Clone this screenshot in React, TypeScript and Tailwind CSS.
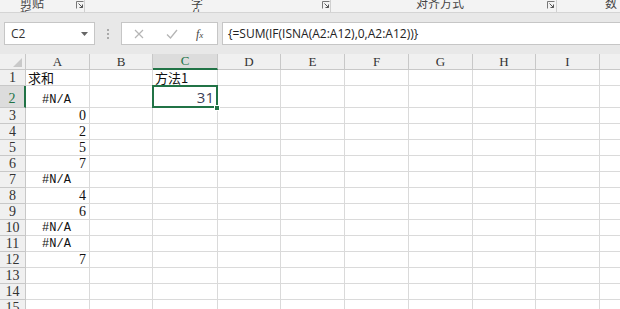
import React from "react";

const colW = [26, 64, 63, 65, 63, 64, 64, 64, 63, 64, 40];
const cols = ["A", "B", "C", "D", "E", "F", "G", "H", "I", ""];
const rowH = [16, 22, 16, 16, 16, 16, 16, 16, 16, 16, 16, 16, 16, 16, 16];

type Cell = { text: string; kind: "cn" | "err" | "num" | "big" };
const data: Record<string, Cell> = {
  "1-0": { text: "求和", kind: "cn" },
  "2-0": { text: "#N/A", kind: "err" },
  "3-0": { text: "0", kind: "num" },
  "4-0": { text: "2", kind: "num" },
  "5-0": { text: "5", kind: "num" },
  "6-0": { text: "7", kind: "num" },
  "7-0": { text: "#N/A", kind: "err" },
  "8-0": { text: "4", kind: "num" },
  "9-0": { text: "6", kind: "num" },
  "10-0": { text: "#N/A", kind: "err" },
  "11-0": { text: "#N/A", kind: "err" },
  "12-0": { text: "7", kind: "num" },
  "1-2": { text: "方法1", kind: "cn" },
  "2-2": { text: "31", kind: "big" },
};

function Launcher() {
  return (
    <svg width="8" height="8" viewBox="0 0 8 8" className="shrink-0">
      <path d="M0.5 7.5V0.5H7.5" fill="none" stroke="#777" strokeWidth="1" />
      <path d="M2.5 2.5L6.5 6.5M6.5 3.5V6.5H3.5" fill="none" stroke="#555" strokeWidth="1" />
    </svg>
  );
}

function CellContent({ c }: { c: Cell }) {
  if (c.kind === "cn")
    return (
      <div className="h-full flex items-end pl-[2px] text-[13px] leading-[15px] text-[#111]" style={{ fontFamily: '"Noto Sans CJK SC", sans-serif' }}>
        {c.text}
      </div>
    );
  if (c.kind === "err")
    return (
      <div className="h-full flex items-end justify-center pr-[2px] text-[12px] leading-[14px] text-[#111]" style={{ fontFamily: '"Liberation Mono", monospace' }}>
        {c.text}
      </div>
    );
  if (c.kind === "big")
    return (
      <div className="h-full flex items-end justify-end pr-[3px] text-[15px] leading-[19px] text-[#3c3f58]" style={{ fontFamily: '"Open Sans", sans-serif' }}>
        {c.text}
      </div>
    );
  return (
    <div className="h-full flex items-end justify-end pr-[3px] text-[14px] leading-[15px] text-[#111]" style={{ fontFamily: '"Liberation Serif", serif' }}>
      {c.text}
    </div>
  );
}

export default function App() {
  const gridCols = colW.map((w) => `${w}px`).join(" ");
  return (
    <div className="w-[620px] h-[309px] overflow-hidden bg-white relative" style={{ fontFamily: '"Noto Sans CJK SC", sans-serif' }}>
      {/* ribbon group labels */}
      <div className="h-[13px] bg-[#f3f3f3] border-b border-[#d4d4d4] flex items-start overflow-hidden text-[12px] leading-[12px] text-[#444]">
        <div className="w-[84px] flex items-start">
          <span className="ml-[20px] -mt-[3px]">剪贴板</span>
          <span className="ml-[25px] mt-[1px]"><Launcher /></span>
        </div>
        <div className="w-px h-[12px] bg-[#d0d0d0]" />
        <div className="w-[245px] flex items-start">
          <span className="ml-[106px] -mt-[3px]">字体</span>
          <span className="ml-[112px] mt-[1px]"><Launcher /></span>
        </div>
        <div className="w-px h-[12px] bg-[#d0d0d0]" />
        <div className="w-[225px] flex items-start">
          <span className="ml-[85px] -mt-[3px]">对齐方式</span>
          <span className="ml-[83px] mt-[1px]"><Launcher /></span>
        </div>
        <div className="w-px h-[12px] bg-[#d0d0d0]" />
        <div className="flex-1 flex items-start">
          <span className="ml-[48px] -mt-[3px]">数</span>
        </div>
      </div>

      {/* formula bar */}
      <div className="h-[41px] bg-[#e8e8e8] flex items-start pt-[9px]">
        <div className="ml-[4px] w-[91px] h-[23px] bg-white border border-[#c6c6c6] flex items-center justify-between pl-[6px] pr-[6px]">
          <span className="text-[12px] text-[#333]" style={{ fontFamily: '"Open Sans", sans-serif' }}>C2</span>
          <svg width="7" height="4" viewBox="0 0 7 4"><path d="M0 0H7L3.5 4Z" fill="#666" /></svg>
        </div>
        <div className="w-[26px] h-[23px] flex flex-col items-center justify-center gap-[2px]">
          <div className="w-[2px] h-[2px] bg-[#aaa]" />
          <div className="w-[2px] h-[2px] bg-[#aaa]" />
          <div className="w-[2px] h-[2px] bg-[#aaa]" />
        </div>
        <div className="w-[97px] h-[23px] bg-white border border-[#c6c6c6] flex items-center">
          <svg width="10" height="10" viewBox="0 0 10 10" className="ml-[12px]">
            <path d="M1 1L9 9M9 1L1 9" stroke="#b5b5b5" strokeWidth="1.2" />
          </svg>
          <svg width="12" height="10" viewBox="0 0 12 10" className="ml-[22px]">
            <path d="M1 5.5L4.5 9L11 1" fill="none" stroke="#b5b5b5" strokeWidth="1.3" />
          </svg>
          <span className="ml-[18px] text-[12px] italic text-[#444]" style={{ fontFamily: '"Liberation Serif", serif' }}>
            f<span className="text-[9px]">x</span>
          </span>
        </div>
        <div className="ml-[4px] flex-1 h-[23px] bg-white border border-[#c6c6c6] border-r-0 flex items-center pl-[5px]">
          <span className="text-[12px] text-[#222] whitespace-nowrap" style={{ fontFamily: '"Open Sans", sans-serif' }}>
            {"{=SUM(IF(ISNA(A2:A12),0,A2:A12))}"}
          </span>
        </div>
      </div>

      {/* grid */}
      <div className="relative">
        <div className="grid" style={{ gridTemplateColumns: gridCols }}>
          {/* header row */}
          <div className="h-[16px] bg-[#f0f0f0] border-r border-b border-[#c8c8c8] relative">
            <svg width="9" height="9" viewBox="0 0 9 9" className="absolute right-[3px] bottom-[2px]">
              <path d="M9 0V9H0Z" fill="#c9c9c9" />
            </svg>
          </div>
          {cols.map((c, i) => (
            <div
              key={c + i}
              className={
                i === 2
                  ? "h-[16px] bg-[#dcdcdc] border-r border-[#c8c8c8] border-b-2 border-b-[#217346] flex items-center justify-center text-[13px] leading-[14px] text-[#217346]"
                  : "h-[16px] bg-[#f0f0f0] border-r border-b border-[#c8c8c8] flex items-center justify-center text-[13px] leading-[14px] text-[#333]"
              }
              style={{ fontFamily: '"Liberation Serif", serif' }}
            >
              {c}
            </div>
          ))}
          {rowH.map((h, r) => (
            <React.Fragment key={r}>
              <div
                className={
                  r === 1
                    ? "bg-[#dcdcdc] border-r-2 border-r-[#217346] border-b border-[#c8c8c8] flex items-end justify-center text-[14px] leading-[16px] text-[#217346]"
                    : "bg-[#f0f0f0] border-r border-b border-[#c8c8c8] flex items-end justify-center text-[14px] leading-[15px] text-[#333]"
                }
                style={{ height: h, fontFamily: '"Liberation Serif", serif' }}
              >
                {r + 1}
              </div>
              {cols.map((_, ci) => {
                const cell = data[`${r + 1}-${ci}`];
                return (
                  <div key={ci} className="border-r border-b border-[#dadada] overflow-visible whitespace-nowrap" style={{ height: h }}>
                    {cell ? <CellContent c={cell} /> : null}
                  </div>
                );
              })}
            </React.Fragment>
          ))}
        </div>
        {/* active cell C2 */}
        <div className="absolute left-[152px] top-[31px] w-[66px] h-[23px] border-2 border-[#217346] pointer-events-none" />
        <div className="absolute left-[214px] top-[51px] w-[6px] h-[6px] bg-[#217346] border border-white" />
      </div>
    </div>
  );
}
